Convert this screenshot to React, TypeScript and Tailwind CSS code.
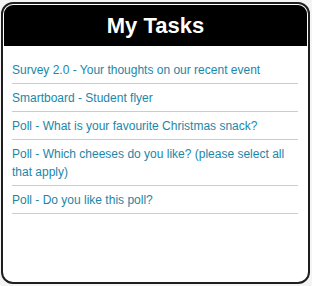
const tasks = [
  "Survey 2.0 - Your thoughts on our recent event",
  "Smartboard - Student flyer",
  "Poll - What is your favourite Christmas snack?",
  "Poll - Which cheeses do you like? (please select all that apply)",
  "Poll - Do you like this poll?",
];

export default function App() {
  return (
    <div className="h-[286px] w-[312px] bg-[#f4f4f4] pt-[2px] pl-[1px] font-['Liberation_Sans',Arial,sans-serif]">
      <div className="flex h-[282px] w-[309px] flex-col rounded-[12px] border-2 border-[#1e1e1e] bg-white p-px">
        <div className="flex h-[41px] items-center justify-center rounded-t-[9px] bg-black">
          <h1 className="text-[22px] leading-none font-bold text-white">My Tasks</h1>
        </div>
        <ul className="mt-[10px] pr-[9px] pl-[8px]">
          {tasks.map((t) => (
            <li key={t} className="border-b border-[#cccccc] pt-[5px] pb-[4px] text-[12px] leading-[18px]">
              <a href="#" className="block text-[#1a87a8]">
                {t}
              </a>
            </li>
          ))}
        </ul>
      </div>
    </div>
  );
}
